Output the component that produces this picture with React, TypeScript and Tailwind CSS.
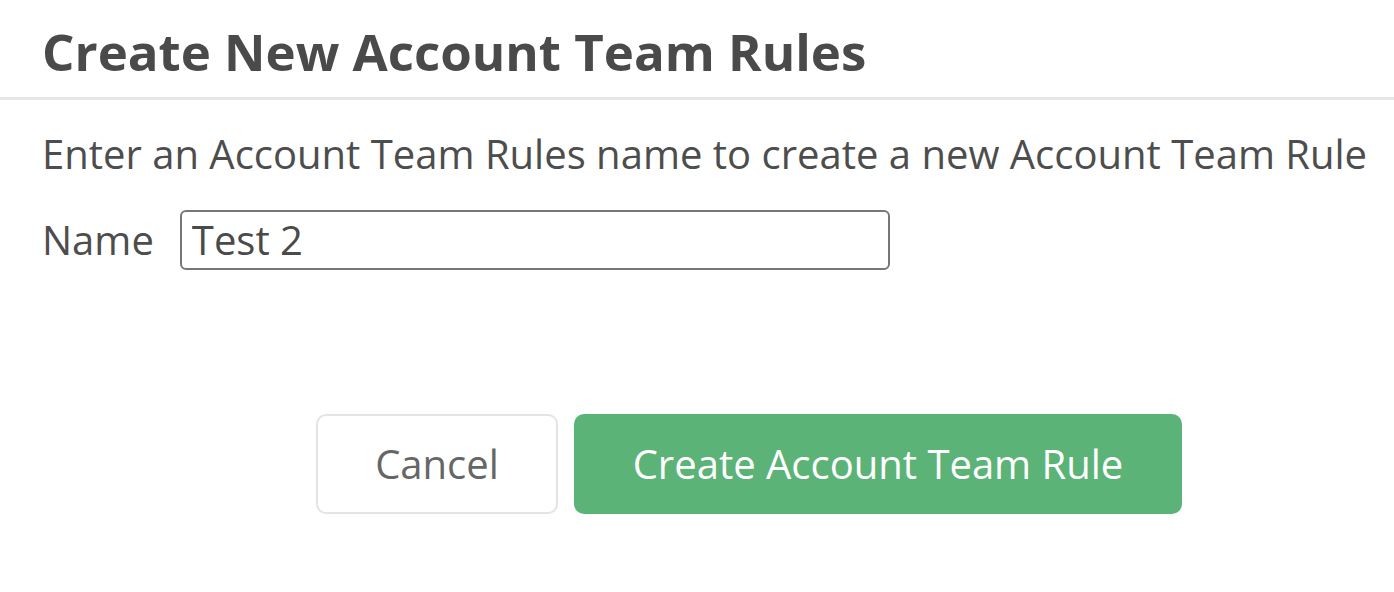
import React, { useState } from 'react';

export default function App() {
    const [name, setName] = useState('Test 2');

    return (
        <div className="w-[1394px] h-[592px] bg-white overflow-hidden" style={{ fontFamily: '"Open Sans", "Liberation Sans", sans-serif' }}>
            <div className="h-[100px] border-b-[3px] border-[#e6e6e6] px-[42px] pt-[6px] flex items-center">
                <h1 className="text-[51px] font-bold text-[#4a4a4a] leading-none">Create New Account Team Rules</h1>
            </div>
            <div className="px-[42px]">
                <p className="mt-[30px] text-[40px] text-[#4d4d4d] leading-[48px] whitespace-nowrap">
                    Enter an Account Team Rules name to create a new Account Team Rule
                </p>
                <div className="mt-[32px] flex items-center gap-[26px]">
                    <label className="text-[40px] text-[#4d4d4d] leading-[48px]">Name</label>
                    <input
                        type="text"
                        value={name}
                        onChange={(e) => setName(e.target.value)}
                        className="w-[710px] h-[60px] border-2 border-[#777777] rounded-[6px] px-[10px] text-[40px] text-[#4a4a4a] focus:outline-none"
                    />
                </div>
            </div>
            <div className="mt-[144px] pl-[316px] flex gap-[16px]">
                <button className="w-[242px] h-[100px] border-2 border-[#e4e4e4] rounded-[10px] bg-white text-[40px] text-[#666666]">
                    Cancel
                </button>
                <button className="w-[608px] h-[100px] rounded-[10px] bg-[#5bb377] text-[40px] text-white">
                    Create Account Team Rule
                </button>
            </div>
        </div>
    );
}
